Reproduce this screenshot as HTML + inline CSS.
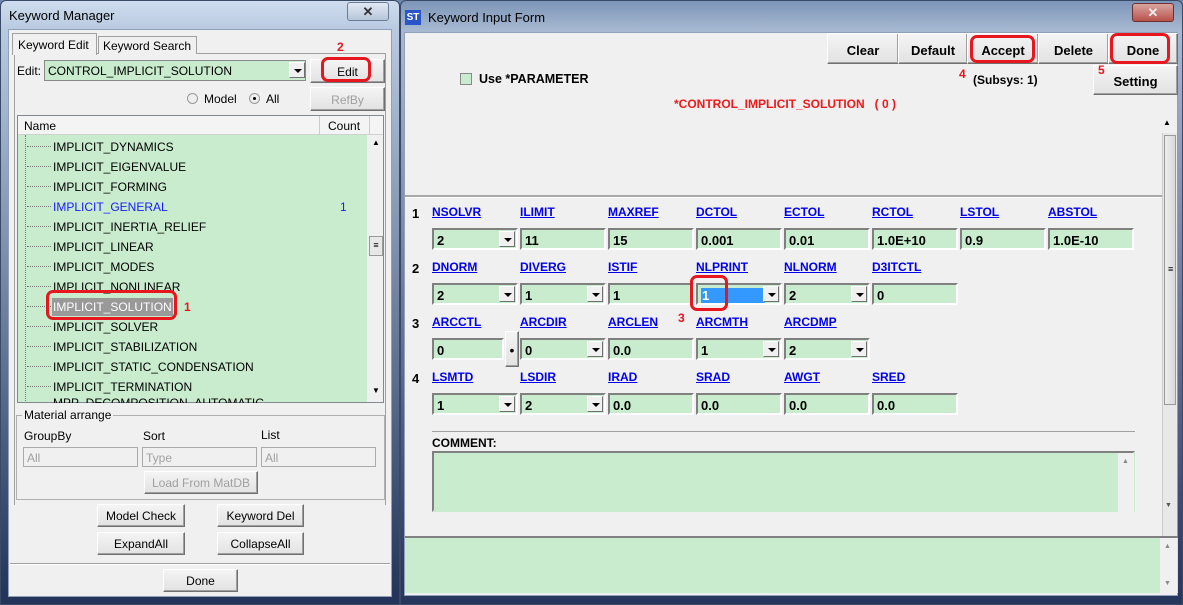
<!DOCTYPE html>
<html><head><meta charset="utf-8"><style>
*{box-sizing:border-box;margin:0;padding:0}
body{width:1183px;height:605px;overflow:hidden;background:#6d87ad;font-family:"Liberation Sans",sans-serif;font-size:12px;position:relative}
.a{position:absolute}
.win{position:absolute;border:1px solid #3a4a66;border-radius:6px 6px 0 0;background:linear-gradient(#c5d4e8,#a9bdd8 30px,#9fb4d2);}
.client{position:absolute;background:#f0f0f0;border:1px solid #8fa0b8}
.btn{position:absolute;background:linear-gradient(#f4f4f4,#e2e2e2);border:1px solid #8a8a8a;border-color:#fff #707070 #707070 #fff;box-shadow:inset -1px -1px 0 #a0a0a0;text-align:center;color:#000}
.inp{position:absolute;height:22px;width:86px;background:#c8eccd;border:2px solid;border-color:#808080 #fff #fff #808080;font-weight:bold;font-size:13px;padding:3px 0 0 3px;color:#000}
.dd{position:absolute;right:1px;top:1px;width:16px;height:16px;background:#f0f0f0;border:1px solid;border-color:#fff #707070 #707070 #fff}
.dd:after{content:"";position:absolute;left:4px;top:6px;border:4px solid transparent;border-top:4px solid #000;border-bottom:0}
.lb{position:absolute;color:#0000ee;text-decoration:underline;font-weight:bold;font-size:12px}
.rn{position:absolute;font-weight:bold;font-size:13px;left:412px}
.red{position:absolute;border:3px solid #e8161e;border-radius:7px}
.rt{position:absolute;color:#e8161e;font-weight:bold;font-size:12px}
.tr{position:absolute;left:53px;font-size:12px}
.dot{position:absolute;left:27px;width:24px;border-top:1px dotted #777}
</style></head><body>

<!-- LEFT WINDOW -->
<div class="win" style="left:0;top:0;width:400px;height:605px;background:linear-gradient(#cfdcee,#b8c9e0 30px,#24345a 595px)"></div>
<div class="a" style="left:9px;top:8px;font-size:13px;color:#000">Keyword Manager</div>
<div class="a" style="left:347px;top:2px;width:42px;height:19px;border:1px solid #6c7c94;border-radius:3px;background:linear-gradient(#e0e8f4,#b8c6da);text-align:center;font-weight:bold;color:#333;font-size:13px;line-height:17px">✕</div>
<div class="client" style="left:8px;top:29px;width:384px;height:568px"></div>
<div class="a" style="left:14px;top:53px;width:372px;height:452px;border:1px solid #a0a0a0;border-bottom:none;background:#f0f0f0"></div>
<div class="a" style="left:12px;top:33px;width:85px;height:22px;border:1px solid #a0a0a0;border-bottom:none;background:#f0f0f0;padding:4px 5px;font-size:12px">Keyword Edit</div>
<div class="a" style="left:98px;top:36px;width:99px;height:18px;border:1px solid #a0a0a0;border-bottom:none;background:#f0f0f0;padding:2px 4px;font-size:12px">Keyword Search</div>
<div class="a" style="left:17px;top:64px">Edit:</div>
<div class="a" style="left:44px;top:60px;width:262px;height:21px;background:#c8eccd;border:1px solid #888;padding:3px 3px;font-size:12px">CONTROL_IMPLICIT_SOLUTION</div>
<div class="dd" style="left:289px;top:62px;right:auto"></div>
<div class="btn" style="left:310px;top:59px;width:75px;height:24px;padding-top:5px">Edit</div>
<div class="red" style="left:321px;top:57px;width:50px;height:25px"></div>
<div class="rt" style="left:337px;top:40px">2</div>
<div class="a" style="left:187px;top:93px;width:11px;height:11px;border-radius:50%;border:1px solid #999;background:#eee"></div>
<div class="a" style="left:204px;top:92px">Model</div>
<div class="a" style="left:249px;top:93px;width:11px;height:11px;border-radius:50%;border:1px solid #999;background:#eee"><div class="a" style="left:3px;top:3px;width:3px;height:3px;background:#000;border-radius:50%"></div></div>
<div class="a" style="left:266px;top:92px">All</div>
<div class="btn" style="left:310px;top:87px;width:75px;height:24px;padding-top:5px;color:#a0a0a0">RefBy</div>
<!-- tree -->
<div class="a" style="left:17px;top:115px;width:367px;height:288px;border:1px solid #828790;background:#c8eccd;overflow:hidden">
 <div class="a" style="left:0;top:0;width:367px;height:19px;background:#f4f4f4;border-bottom:1px solid #d0d0d0"></div>
 <div class="a" style="left:6px;top:3px">Name</div>
 <div class="a" style="left:301px;top:0;height:19px;border-left:1px solid #ccc"></div>
 <div class="a" style="left:310px;top:3px">Count</div>
 <div class="a" style="left:351px;top:0;height:19px;border-left:1px solid #ccc"></div>
 <div class="a" style="left:349px;top:19px;width:17px;height:268px;background:#f0f0f0"></div>
 <div class="a" style="left:351px;top:120px;width:14px;height:20px;border:1px solid #999;background:#e8e8e8;font-size:9px;text-align:center;line-height:17px">≡</div>
 <div class="a" style="left:354px;top:22px;font-size:8px">▲</div>
 <div class="a" style="left:354px;top:270px;font-size:8px">▼</div>
 <div class="a" style="left:7px;top:19px;height:270px;border-left:1px dotted #777"></div>
</div>
<div class="dot" style="top:146px"></div><div class="tr" style="top:140px">IMPLICIT_DYNAMICS</div>
<div class="dot" style="top:166px"></div><div class="tr" style="top:160px">IMPLICIT_EIGENVALUE</div>
<div class="dot" style="top:186px"></div><div class="tr" style="top:180px">IMPLICIT_FORMING</div>
<div class="dot" style="top:206px"></div><div class="tr" style="top:200px;color:#1a1aff">IMPLICIT_GENERAL</div><div class="a" style="left:340px;top:200px;color:#1a1aff">1</div>
<div class="dot" style="top:226px"></div><div class="tr" style="top:220px">IMPLICIT_INERTIA_RELIEF</div>
<div class="dot" style="top:246px"></div><div class="tr" style="top:240px">IMPLICIT_LINEAR</div>
<div class="dot" style="top:266px"></div><div class="tr" style="top:260px">IMPLICIT_MODES</div>
<div class="dot" style="top:286px"></div><div class="tr" style="top:280px">IMPLICIT_NONLINEAR</div>
<div class="dot" style="top:306px"></div><div class="tr" style="top:298px;background:#999;color:#fff;padding:2px 1px;left:52px">IMPLICIT_SOLUTION</div>
<div class="red" style="left:46px;top:290px;width:131px;height:30px"></div>
<div class="rt" style="left:184px;top:300px">1</div>
<div class="dot" style="top:326px"></div><div class="tr" style="top:320px">IMPLICIT_SOLVER</div>
<div class="dot" style="top:346px"></div><div class="tr" style="top:340px">IMPLICIT_STABILIZATION</div>
<div class="dot" style="top:366px"></div><div class="tr" style="top:360px">IMPLICIT_STATIC_CONDENSATION</div>
<div class="dot" style="top:386px"></div><div class="tr" style="top:380px">IMPLICIT_TERMINATION</div>
<div class="a" style="left:53px;top:398px;height:5px;overflow:hidden;width:250px"><div style="margin-top:-2px">MPP_DECOMPOSITION_AUTOMATIC</div></div>
<!-- material arrange -->
<div class="a" style="left:16px;top:415px;width:369px;height:85px;border:1px solid #b0b0b0"></div>
<div class="a" style="left:22px;top:408px;background:#f0f0f0;padding:0 2px">Material arrange</div>
<div class="a" style="left:24px;top:429px">GroupBy</div>
<div class="a" style="left:143px;top:429px">Sort</div>
<div class="a" style="left:261px;top:428px">List</div>
<div class="a" style="left:23px;top:447px;width:115px;height:20px;border:1px solid #aaa;background:#f0f0f0;color:#a0a0a0;padding:3px">All</div>
<div class="a" style="left:142px;top:447px;width:115px;height:20px;border:1px solid #aaa;background:#f0f0f0;color:#a0a0a0;padding:3px">Type</div>
<div class="a" style="left:261px;top:447px;width:115px;height:20px;border:1px solid #aaa;background:#f0f0f0;color:#a0a0a0;padding:3px">All</div>
<div class="btn" style="left:144px;top:471px;width:114px;height:23px;padding-top:4px;color:#a0a0a0">Load From MatDB</div>
<div class="btn" style="left:97px;top:504px;width:88px;height:23px;padding-top:4px">Model Check</div>
<div class="btn" style="left:217px;top:504px;width:87px;height:23px;padding-top:4px">Keyword Del</div>
<div class="btn" style="left:97px;top:532px;width:88px;height:23px;padding-top:4px">ExpandAll</div>
<div class="btn" style="left:217px;top:532px;width:87px;height:23px;padding-top:4px">CollapseAll</div>
<div class="a" style="left:10px;top:563px;width:380px;border-top:1px solid #a0a0a0;border-bottom:1px solid #fff"></div>
<div class="btn" style="left:163px;top:569px;width:75px;height:23px;padding-top:4px">Done</div>

<!-- RIGHT WINDOW -->
<div class="win" style="left:400px;top:0;width:783px;height:605px;background:linear-gradient(#7d95b8,#a7b9d2 30px,#26365c 600px)"></div>
<div class="a" style="left:405px;top:10px;width:16px;height:15px;background:#2a55c8;color:#fff;font-size:10px;font-weight:bold;line-height:15px;text-align:center">ST</div>
<div class="a" style="left:428px;top:10px;font-size:13px">Keyword Input Form</div>
<div class="a" style="left:1132px;top:3px;width:42px;height:19px;border:1px solid #6c3030;border-radius:3px;background:linear-gradient(#d9a5a0,#b8524a);text-align:center;font-weight:bold;color:#eee;font-size:13px;line-height:17px">✕</div>
<div class="client" style="left:404px;top:32px;width:774px;height:564px"></div>
<div class="btn" style="left:827px;top:33px;width:72px;height:31px;padding-top:9px;font-weight:bold;font-size:13px">Clear</div>
<div class="btn" style="left:898px;top:33px;width:70px;height:31px;padding-top:9px;font-weight:bold;font-size:13px">Default</div>
<div class="btn" style="left:967px;top:33px;width:72px;height:31px;padding-top:9px;font-weight:bold;font-size:13px">Accept</div>
<div class="btn" style="left:1038px;top:33px;width:71px;height:31px;padding-top:9px;font-weight:bold;font-size:13px">Delete</div>
<div class="btn" style="left:1108px;top:33px;width:70px;height:31px;padding-top:9px;font-weight:bold;font-size:13px">Done</div>
<div class="red" style="left:970px;top:35px;width:65px;height:28px"></div>
<div class="red" style="left:1110px;top:33px;width:60px;height:31px"></div>
<div class="btn" style="left:1093px;top:65px;width:85px;height:30px;padding-top:8px;font-weight:bold;font-size:13px">Setting</div>
<div class="rt" style="left:959px;top:67px">4</div>
<div class="rt" style="left:1098px;top:63px">5</div>
<div class="a" style="left:973px;top:73px;font-weight:bold">(Subsys: 1)</div>
<div class="a" style="left:460px;top:73px;width:12px;height:12px;border:1px solid #888;background:#c8eccd"></div>
<div class="a" style="left:479px;top:72px;font-weight:bold;font-size:12.5px">Use *PARAMETER</div>
<div class="a" style="left:674px;top:97px;font-weight:bold;color:#f01818;font-size:12px;white-space:pre">*CONTROL_IMPLICIT_SOLUTION   ( 0 )</div>
<div class="a" style="left:1163px;top:118px;font-size:8px">▲</div>
<div class="a" style="left:405px;top:195px;width:757px;border-top:2px solid #a8a8a8;border-bottom:1px solid #fff"></div>
<!-- main scrollbar -->
<div class="a" style="left:1162px;top:133px;width:15px;height:455px;background:#e8e8e8;border-left:1px solid #ccc"></div>
<div class="a" style="left:1164px;top:135px;width:12px;height:270px;border:1px solid #999;background:linear-gradient(90deg,#eee,#d8d8d8)"></div>
<div class="a" style="left:1168px;top:264px;font-size:9px">≡</div>

<!-- rows -->
<div class="rn" style="top:206px">1</div>
<div class="lb" style="left:432px;top:205px">NSOLVR</div><div class="lb" style="left:520px;top:205px">ILIMIT</div><div class="lb" style="left:608px;top:205px">MAXREF</div><div class="lb" style="left:696px;top:205px">DCTOL</div><div class="lb" style="left:784px;top:205px">ECTOL</div><div class="lb" style="left:872px;top:205px">RCTOL</div><div class="lb" style="left:960px;top:205px">LSTOL</div><div class="lb" style="left:1048px;top:205px">ABSTOL</div>
<div class="inp" style="left:432px;top:228px">2<div class="dd"></div></div>
<div class="inp" style="left:520px;top:228px">11</div><div class="inp" style="left:608px;top:228px">15</div><div class="inp" style="left:696px;top:228px">0.001</div><div class="inp" style="left:784px;top:228px">0.01</div><div class="inp" style="left:872px;top:228px">1.0E+10</div><div class="inp" style="left:960px;top:228px">0.9</div><div class="inp" style="left:1048px;top:228px">1.0E-10</div>

<div class="rn" style="top:261px">2</div>
<div class="lb" style="left:432px;top:260px">DNORM</div><div class="lb" style="left:520px;top:260px">DIVERG</div><div class="lb" style="left:608px;top:260px">ISTIF</div><div class="lb" style="left:696px;top:260px">NLPRINT</div><div class="lb" style="left:784px;top:260px">NLNORM</div><div class="lb" style="left:872px;top:260px">D3ITCTL</div>
<div class="inp" style="left:432px;top:283px">2<div class="dd"></div></div>
<div class="inp" style="left:520px;top:283px">1<div class="dd"></div></div>
<div class="inp" style="left:608px;top:283px">1</div>
<div class="inp" style="left:696px;top:283px"><span style="display:inline-block;background:#3399ff;color:#fff;width:64px;padding-left:1px">1</span><div class="dd"></div></div>
<div class="inp" style="left:784px;top:283px">2<div class="dd"></div></div>
<div class="inp" style="left:872px;top:283px">0</div>
<div class="red" style="left:690px;top:275px;width:38px;height:36px"></div>
<div class="rt" style="left:678px;top:311px">3</div>

<div class="rn" style="top:316px">3</div>
<div class="lb" style="left:432px;top:315px">ARCCTL</div><div class="lb" style="left:520px;top:315px">ARCDIR</div><div class="lb" style="left:608px;top:315px">ARCLEN</div><div class="lb" style="left:696px;top:315px">ARCMTH</div><div class="lb" style="left:784px;top:315px">ARCDMP</div>
<div class="inp" style="left:432px;top:338px;width:72px">0</div>
<div class="btn" style="left:505px;top:331px;width:14px;height:36px;padding-top:10px;font-size:14px">•</div>
<div class="inp" style="left:520px;top:338px">0<div class="dd"></div></div>
<div class="inp" style="left:608px;top:338px">0.0</div>
<div class="inp" style="left:696px;top:338px">1<div class="dd"></div></div>
<div class="inp" style="left:784px;top:338px">2<div class="dd"></div></div>

<div class="rn" style="top:371px">4</div>
<div class="lb" style="left:432px;top:370px">LSMTD</div><div class="lb" style="left:520px;top:370px">LSDIR</div><div class="lb" style="left:608px;top:370px">IRAD</div><div class="lb" style="left:696px;top:370px">SRAD</div><div class="lb" style="left:784px;top:370px">AWGT</div><div class="lb" style="left:872px;top:370px">SRED</div>
<div class="inp" style="left:432px;top:393px">1<div class="dd"></div></div>
<div class="inp" style="left:520px;top:393px">2<div class="dd"></div></div>
<div class="inp" style="left:608px;top:393px">0.0</div><div class="inp" style="left:696px;top:393px">0.0</div><div class="inp" style="left:784px;top:393px">0.0</div><div class="inp" style="left:872px;top:393px">0.0</div>

<div class="a" style="left:432px;top:431px;width:703px;border-top:1px solid #a0a0a0"></div>
<div class="a" style="left:432px;top:436px;font-weight:bold;font-size:12px">COMMENT:</div>
<div class="a" style="left:432px;top:451px;width:703px;height:61px;background:#c8eccd;border:2px solid;border-color:#808080 #c8eccd #c8eccd #808080"></div>
<div class="a" style="left:1118px;top:453px;width:16px;height:59px;background:#f0f0f0"></div>
<div class="a" style="left:1122px;top:458px;font-size:7px;color:#888">▲</div>
<div class="a" style="left:1165px;top:502px;font-size:7px;color:#555">▼</div>
<div class="a" style="left:405px;top:536px;width:773px;height:57px;background:#c8eccd;border-top:2px solid #808080"></div>
<div class="a" style="left:1160px;top:538px;width:17px;height:55px;background:#f0f0f0"></div>
<div class="a" style="left:1164px;top:543px;font-size:7px;color:#888">▲</div>
<div class="a" style="left:1164px;top:580px;font-size:7px;color:#888">▼</div>
</body></html>
